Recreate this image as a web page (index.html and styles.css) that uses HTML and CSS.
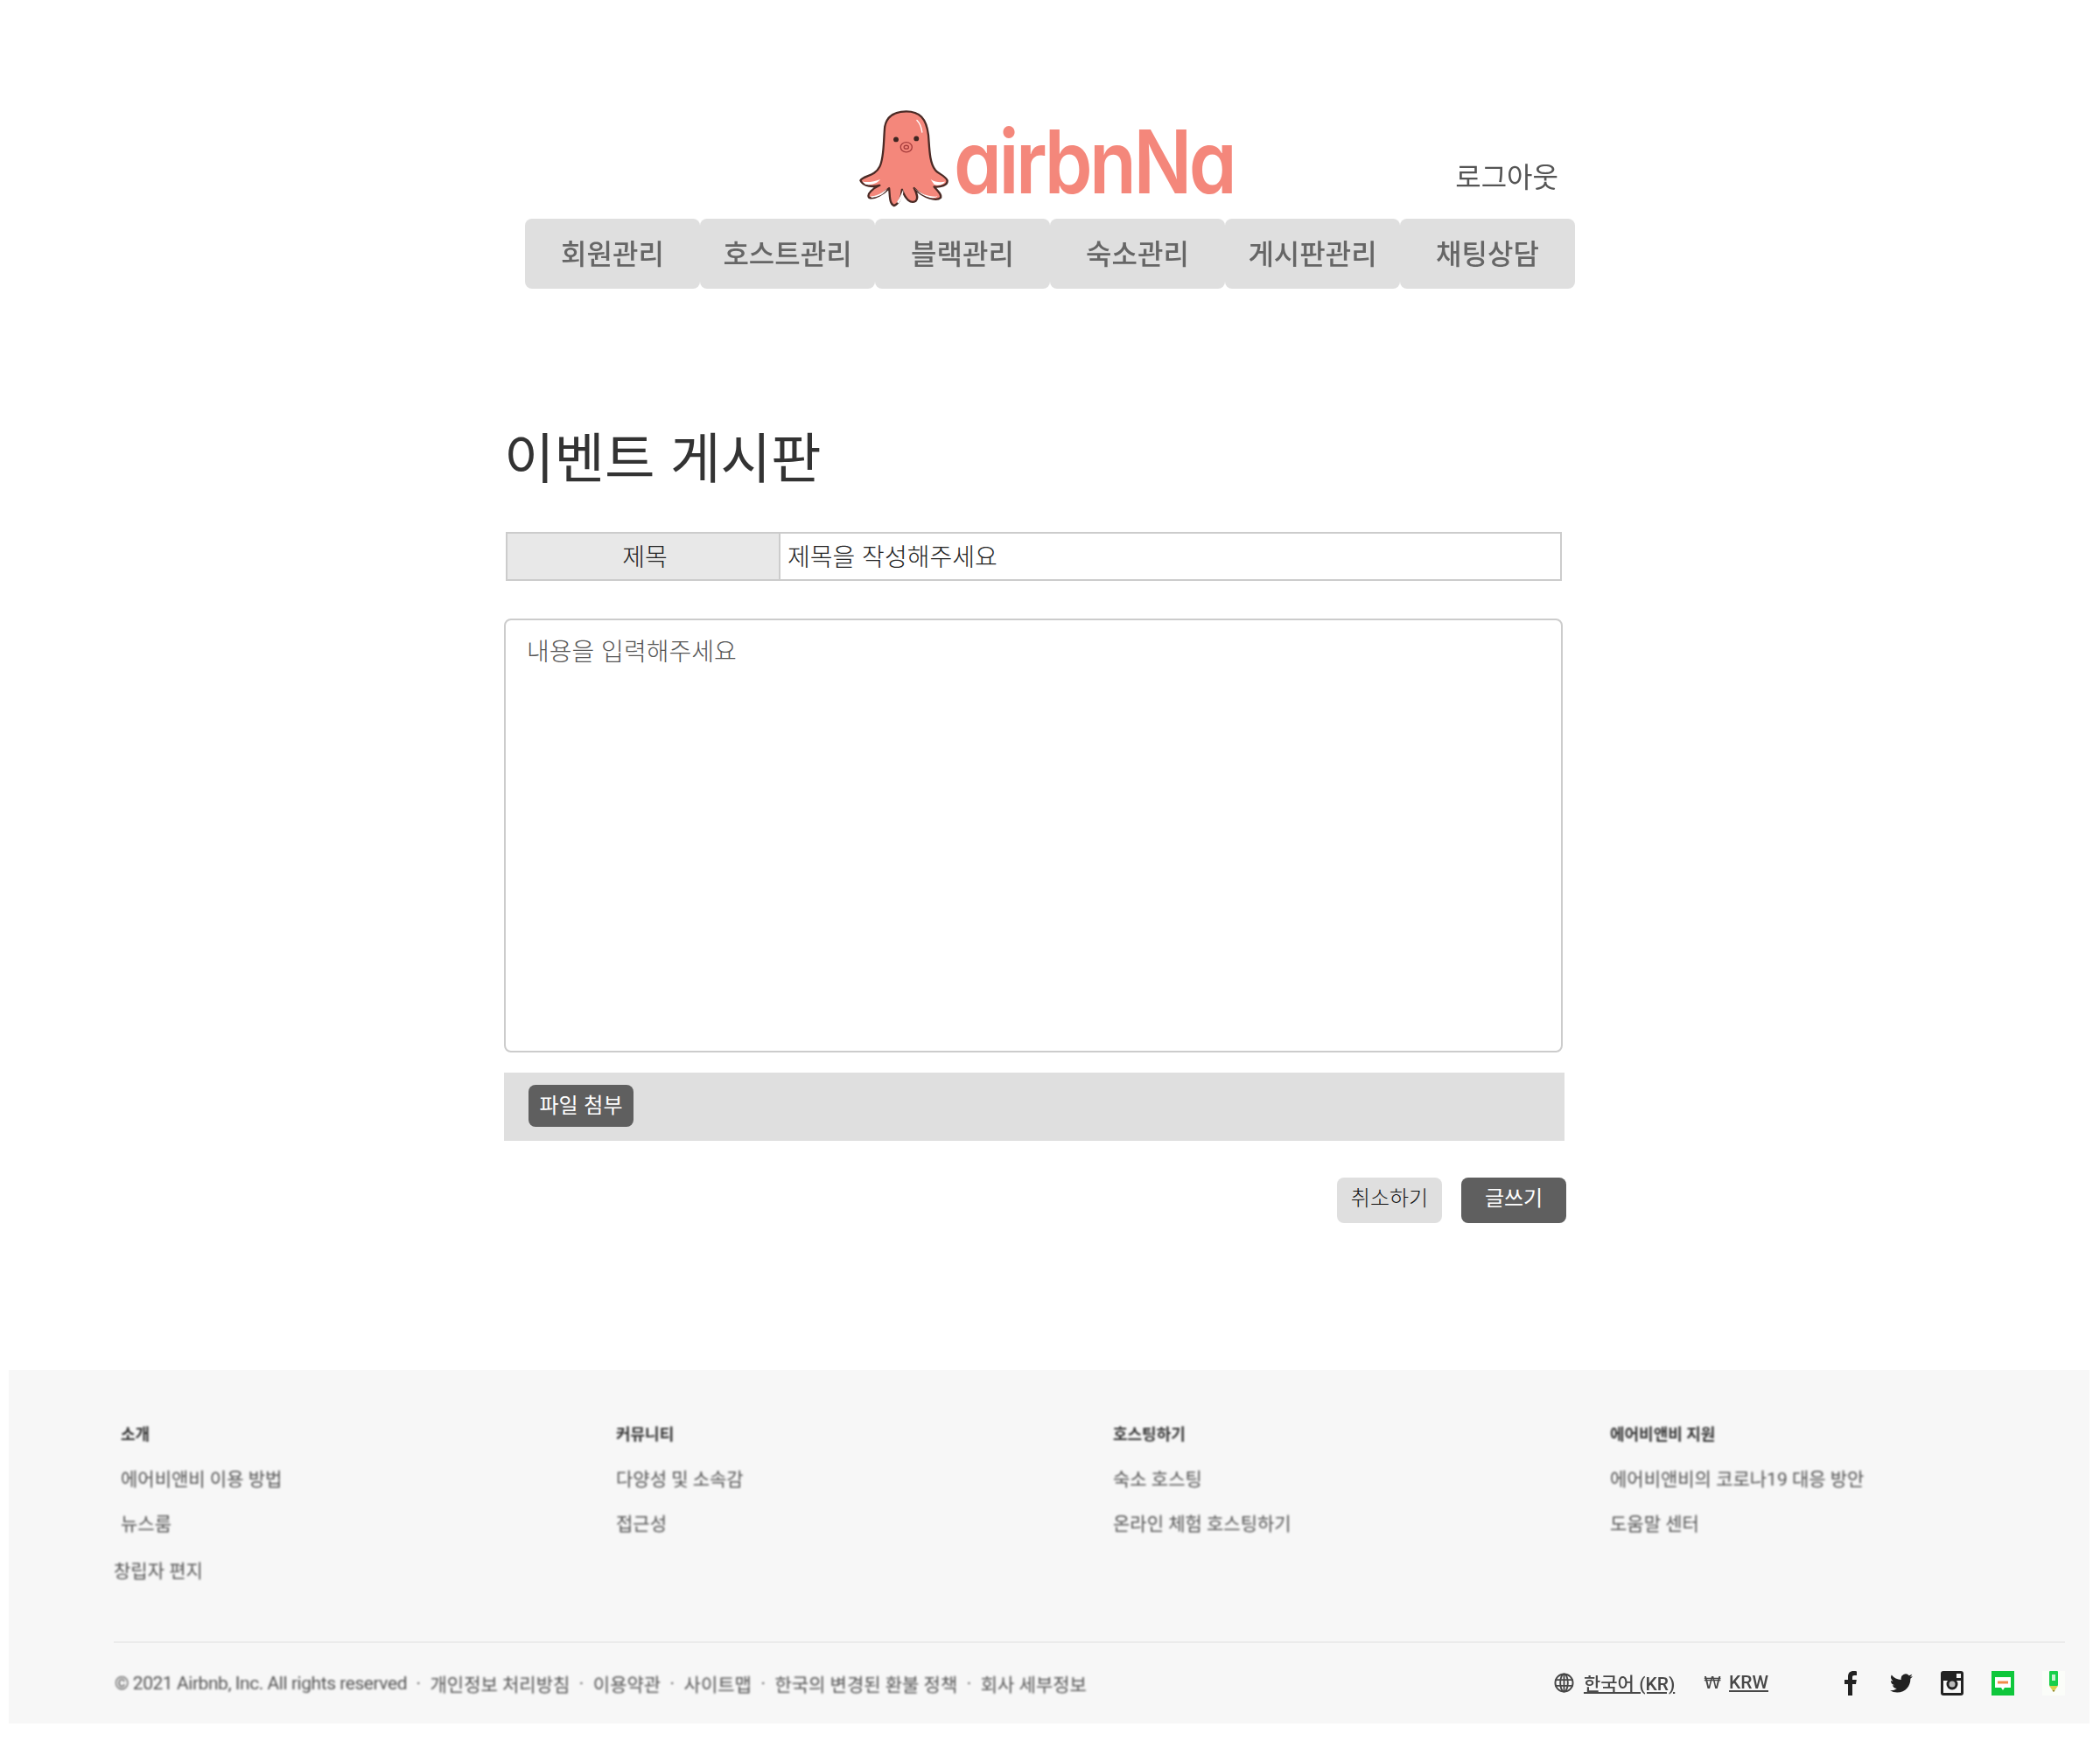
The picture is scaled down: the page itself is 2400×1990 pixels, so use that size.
FILE: index.html
```html
<!DOCTYPE html>
<html lang="ko">
  <head>
    <meta charset="UTF-8" />
    <title>이벤트 게시판</title>
    <link rel="stylesheet" href="styles.css">
  </head>
  <body>
    <header class="header">
      <div class="top-row">
        <a class="logo" href="#">
          <svg class="logo-mark" viewBox="58 70 320 345">
            <path class="octo-body" d="M225 77 C270 77 295 100 302 160 C306 210 306 255 325 280 C335 295 360 300 368 318 C370 335 345 342 322 340 C335 355 348 365 345 378 C330 392 285 380 252 345 C262 365 268 380 258 390 C240 400 222 385 210 350 C208 375 200 400 182 406 C165 400 168 370 165 345 C145 365 115 385 95 378 C85 365 110 345 132 335 C110 342 75 340 65 318 C75 300 115 305 132 270 C148 240 145 180 150 130 C158 90 190 77 225 77 Z"/>
            <path class="octo-white" d="M72 322 C90 326 115 322 134 314 C125 328 100 336 82 332 Z"/>
            <path class="octo-white" d="M100 374 C120 374 140 362 158 348 C150 364 125 378 104 378 Z"/>
            <path class="octo-white" d="M192 394 C202 380 208 364 214 350 C216 366 210 384 198 398 Z"/>
            <path class="octo-white" d="M252 344 C275 366 305 376 334 374 C320 386 285 378 252 344 Z"/>
            <path class="octo-white" d="M310 314 C325 324 345 326 360 322 C355 334 335 338 322 332 Z"/>
            <path class="octo-shine" d="M262 108 C272 118 278 134 280 150"/>
            <circle class="octo-eye" cx="189" cy="175" r="9"/>
            <circle class="octo-eye" cx="260" cy="172" r="9"/>
            <ellipse class="octo-nose" cx="225" cy="202" rx="20" ry="17"/>
            <ellipse class="octo-nose" cx="225" cy="202" rx="8" ry="6"/>
          </svg>
          <span class="logo-text">airbnNa</span>
        </a>
        <a class="logout" href="#">로그아웃</a>
      </div>
      <nav class="nav">
        <a class="nav-item" href="#">회원관리</a>
        <a class="nav-item" href="#">호스트관리</a>
        <a class="nav-item" href="#">블랙관리</a>
        <a class="nav-item" href="#">숙소관리</a>
        <a class="nav-item" href="#">게시판관리</a>
        <a class="nav-item" href="#">채팅상담</a>
      </nav>
    </header>

    <main class="board">
      <h1 class="board-title">이벤트 게시판</h1>
      <form>
        <div class="title-row">
          <label class="title-label" for="title-input">제목</label>
          <input class="title-input" id="title-input" type="text" placeholder="제목을 작성해주세요" />
        </div>
        <textarea class="content-input" placeholder="내용을 입력해주세요"></textarea>
        <div class="attach-bar">
          <button class="btn btn-dark" type="button">파일 첨부</button>
        </div>
        <div class="actions">
          <button class="btn btn-light" type="button">취소하기</button>
          <button class="btn btn-dark" type="submit">글쓰기</button>
        </div>
      </form>
    </main>

    <footer class="footer">
      <div class="footer-cols">
        <ul class="footer-col footer-col-first">
          <li class="footer-head">소개</li>
          <li>에어비앤비 이용 방법</li>
          <li>뉴스룸</li>
          <li class="footer-off">창립자 편지</li>
        </ul>
        <ul class="footer-col">
          <li class="footer-head">커뮤니티</li>
          <li>다양성 및 소속감</li>
          <li>접근성</li>
        </ul>
        <ul class="footer-col">
          <li class="footer-head">호스팅하기</li>
          <li>숙소 호스팅</li>
          <li>온라인 체험 호스팅하기</li>
        </ul>
        <ul class="footer-col">
          <li class="footer-head">에어비앤비 지원</li>
          <li>에어비앤비의 코로나19 대응 방안</li>
          <li>도움말 센터</li>
        </ul>
      </div>
      <div class="footer-bottom">
        <div class="legal">
          <span class="copyright">© 2021 Airbnb, Inc. All rights reserved</span>
          <span>·</span>
          <a href="#">개인정보 처리방침</a>
          <span>·</span>
          <a href="#">이용약관</a>
          <span>·</span>
          <a href="#">사이트맵</a>
          <span>·</span>
          <a href="#">한국의 변경된 환불 정책</a>
          <span>·</span>
          <a href="#">회사 세부정보</a>
        </div>
        <div class="locale">
          <svg class="globe" viewBox="0 0 24 24">
            <circle cx="12" cy="12" r="10.5"/>
            <ellipse cx="12" cy="12" rx="4.5" ry="10.5"/>
            <path d="M1.5 8.5h21M1.5 15.5h21M12 1.5v21"/>
          </svg>
          <a class="locale-link" href="#">한국어 (KR)</a>
          <span class="won">₩</span>
          <a class="locale-link" href="#">KRW</a>
        </div>
        <div class="social">
          <svg class="social-icon" viewBox="0 0 26 28">
            <path fill="#222" d="M15 28V15h4l.8-5H15V7.2C15 5.7 15.5 5 17.2 5H20V.4C19.2.2 17.8 0 16.2 0 12.4 0 10 2.2 10 6.4V10H6v5h4v13z"/>
          </svg>
          <svg class="social-icon" viewBox="0 0 24 24">
            <path fill="#222" d="M23.95 4.57a10 10 0 0 1-2.83.78 4.96 4.96 0 0 0 2.17-2.72 9.9 9.9 0 0 1-3.13 1.19 4.92 4.92 0 0 0-8.38 4.48A13.97 13.97 0 0 1 1.64 3.16a4.92 4.92 0 0 0 1.52 6.57 4.9 4.9 0 0 1-2.23-.61v.06a4.92 4.92 0 0 0 3.95 4.83 5 5 0 0 1-2.21.08 4.94 4.94 0 0 0 4.6 3.42A9.87 9.87 0 0 1 0 19.54a13.94 13.94 0 0 0 7.55 2.21c9.05 0 14-7.5 14-13.98 0-.21 0-.42-.02-.63a10 10 0 0 0 2.42-2.57z"/>
          </svg>
          <svg class="social-icon" viewBox="0 0 26 28">
            <rect x="0" y="0" width="26" height="28" rx="3" fill="#222"/>
            <rect x="3" y="11" width="20" height="14" fill="#f7f7f7"/>
            <circle cx="13" cy="15" r="6.5" fill="#222"/>
            <circle cx="13" cy="15" r="3.5" fill="#bbb"/>
            <rect x="18" y="3" width="5" height="5" fill="#f7f7f7"/>
          </svg>
          <svg class="social-icon" viewBox="0 0 26 28">
            <rect x="0" y="0" width="26" height="28" fill="#0fc73c"/>
            <path fill="#fff" d="M4 7h18v12h-7l-2 3-2-3H4z"/>
            <rect x="7" y="11.5" width="12" height="3" fill="#f28b4a"/>
          </svg>
          <svg class="social-icon" viewBox="0 0 26 28">
            <rect x="0" y="0" width="26" height="28" fill="#fbfdf9"/>
            <rect x="8" y="0" width="10" height="17" rx="1" fill="#18cf4a"/>
            <rect x="11" y="4" width="4" height="7" fill="#c9f2d2"/>
            <path fill="#d6d24e" d="M8 17h10l-5 7z"/>
            <path fill="#8a7a30" d="M11.5 22h3L13 24z"/>
          </svg>
        </div>
      </div>
    </footer>
  </body>
</html>
```

FILE: styles.css
```css
/* Reset styles */
*,
*::before,
*::after {
  margin: 0;
  padding: 0;
  box-sizing: border-box;
}

body {
  font-family: "Noto Sans CJK KR", "Noto Sans", sans-serif;
  color: #333;
  background-color: #fff;
}

a {
  color: inherit;
  text-decoration: none;
}

ul {
  list-style: none;
}

/* Header */
.header {
  width: 1200px;
  margin-left: 600px;
  padding-top: 125px;
}

.top-row {
  display: flex;
  height: 113px;
  padding-left: 381px;
  padding-right: 19px;
}

.logo {
  display: flex;
  align-items: flex-start;
  gap: 4px;
}

.logo-mark {
  width: 105px;
  height: 113px;
}

.octo-body {
  fill: #f4877b;
  stroke: #4a2a25;
  stroke-width: 7;
  stroke-linejoin: round;
}

.octo-white {
  fill: #fff;
}

.octo-shine {
  fill: none;
  stroke: #fff;
  stroke-width: 4;
  stroke-linecap: round;
}

.octo-eye {
  fill: #3f2622;
}

.octo-nose {
  fill: none;
  stroke: #a63c3c;
  stroke-width: 4;
}

.logo-text {
  margin-top: 3px;
  font-family: "Inter", sans-serif;
  font-size: 100px;
  font-weight: 600;
  font-feature-settings: "cv11";
  line-height: 113px;
  letter-spacing: -4px;
  color: #f4877b;
  transform: scaleX(0.88);
  transform-origin: left center;
}

.logout {
  margin-left: auto;
  align-self: flex-end;
  margin-bottom: 18px;
  font-size: 32px;
  line-height: 40px;
  color: #555;
  filter: blur(0.3px);
}

.nav {
  display: flex;
  margin-top: 12px;
}

.nav-item {
  flex: 1;
  height: 80px;
  font-size: 32px;
  font-weight: 500;
  line-height: 76px;
  text-align: center;
  color: #666;
  background-color: #dfdfdf;
  border-radius: 8px;
  filter: blur(0.4px);
}

/* Board */
.board {
  width: 1214px;
  margin-left: 576px;
}

.board-title {
  margin-top: 155px;
  margin-bottom: 53px;
  font-size: 62.5px;
  font-weight: 400;
  line-height: 70px;
}

.title-row {
  display: flex;
  width: 1207px;
  height: 56px;
  margin-left: 2px;
  border: 2px solid #ccc;
}

.title-label {
  width: 312px;
  padding-left: 4px;
  font-size: 28px;
  font-weight: 300;
  line-height: 50px;
  text-align: center;
  color: #222;
  background-color: #e8e8e8;
  border-right: 2px solid #ccc;
}

.title-input {
  flex: 1;
  padding: 0 0 3px 8px;
  font-family: inherit;
  font-size: 28px;
  font-weight: 300;
  border: none;
  outline: none;
}

.title-input::placeholder {
  color: #222;
  opacity: 1;
}

.content-input {
  display: block;
  width: 1210px;
  height: 496px;
  margin-top: 43px;
  padding: 14px 24px;
  font-family: inherit;
  font-size: 28px;
  font-weight: 300;
  border: 2px solid #ccc;
  border-radius: 8px;
  outline: none;
  resize: none;
}

.content-input::placeholder {
  color: #555;
  opacity: 1;
}

.attach-bar {
  width: 1212px;
  height: 78px;
  margin-top: 23px;
  padding: 14px 28px;
  background-color: #dfdfdf;
}

.btn {
  width: 120px;
  font-family: inherit;
  font-size: 24px;
  border: none;
  border-radius: 8px;
  cursor: pointer;
}

.btn-dark {
  color: #fff;
  background-color: #5f5f5f;
}

.btn-light {
  font-weight: 300;
  color: #111;
  background-color: #dfdfdf;
}

.attach-bar .btn {
  height: 48px;
  padding-bottom: 5px;
}

.actions {
  display: flex;
  justify-content: flex-end;
  gap: 22px;
  margin-top: 42px;
}

.actions .btn {
  height: 52px;
  padding-bottom: 9px;
}

/* Footer */
.footer {
  height: 404px;
  margin: 168px 12px 0 10px;
  padding: 59px 28px 0 120px;
  font-family: "Roboto", "Noto Sans CJK KR", sans-serif;
  font-size: 21px;
  color: #555;
  background-color: #f7f7f7;
}

.footer-cols {
  display: grid;
  grid-template-columns: repeat(4, 568px);
  margin-left: 6px;
  height: 251px;
  filter: blur(0.8px);
}

.footer-col {
  display: flex;
  flex-direction: column;
  gap: 21px;
  line-height: 30px;
}

.footer-col-first {
  padding-left: 2px;
}

.footer-head {
  font-size: 18px;
  font-weight: 700;
  color: #333;
}

.footer-off {
  margin-top: 3px;
  margin-left: -8px;
}

.footer-bottom {
  display: flex;
  align-items: center;
  height: 94px;
  border-top: 2px solid #ebebeb;
}

.legal {
  display: flex;
  align-items: center;
  gap: 10.5px;
  padding-left: 1px;
  filter: blur(0.8px);
}

.copyright {
  letter-spacing: -0.45px;
}

.locale {
  display: flex;
  align-items: center;
  margin-left: auto;
  padding-bottom: 2px;
  font-size: 21px;
  color: #484848;
  filter: blur(0.6px);
}

.globe {
  width: 23px;
  height: 23px;
  margin-right: 11px;
  fill: none;
  stroke: #484848;
  stroke-width: 2;
}

.locale-link {
  font-weight: 500;
  text-decoration: underline;
}

.won {
  margin: 0 9px 0 33px;
  font-family: "DejaVu Sans", sans-serif;
  font-size: 20px;
}

.social {
  display: flex;
  align-items: center;
  gap: 32px;
  margin-left: 81px;
  filter: blur(0.6px);
}

.social-icon {
  width: 26px;
  height: 28px;
}
```
